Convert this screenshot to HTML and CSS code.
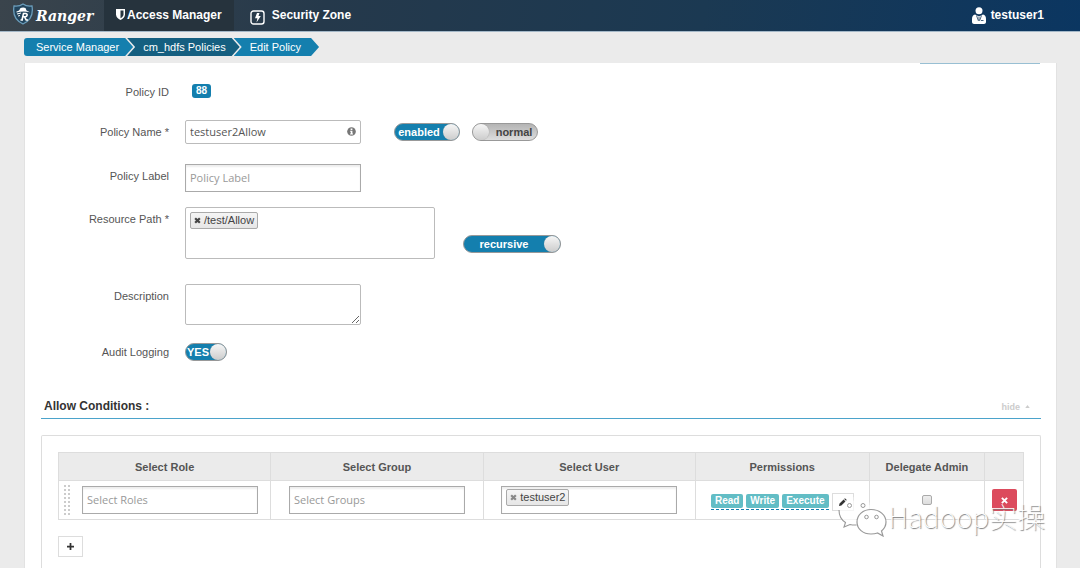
FILE: index.html
```html
<!DOCTYPE html>
<html lang="en">
<head>
<meta charset="utf-8">
<title>Ranger - Edit Policy</title>
<link rel="stylesheet" href="styles.css">
</head>
<body>
<header class="topbar">
  <a class="brand" href="#">
    <svg class="brand-icon" viewBox="0 0 22 22" aria-hidden="true">
      <path d="M11 1C8.500 2.800 5 3.400 2 3C1 9 2 17 11 21C20 17 21 9 20 3C17 3.400 13.500 2.800 11 1Z" fill="#23455d" stroke="#6b9dbb" stroke-width="1.300"/>
      <path d="M4.500 8.500C7 8 7.500 7.500 8 5.500C9.500 4.300 12 4.200 13.500 5L14.500 7.500L18 9.200C13 8 9 8.200 4.500 9.500Z" fill="#fff"/>
      <path d="M5 11L9 10M6 13L8 12.500" stroke="#fff" stroke-width="1"/>
      <path d="M8.500 17H11M10 17L11.500 10.500H13.500C16 10.500 15.500 13.500 13 13.700H11M12.500 13.700L14.200 17H16" fill="none" stroke="#fff" stroke-width="1.600"/>
    </svg>
    <span class="brand-name">Ranger</span>
  </a>
  <nav class="nav">
    <a class="nav-link nav-link-active" href="#">
      <svg class="shield-icon" viewBox="0 0 9 11" aria-hidden="true"><path d="M0 0H9V5.500C9 8 7 10 4.500 11C2 10 0 8 0 5.500Z" fill="#fff"/><path d="M7.500 1.500V5.500C7.500 7 6.300 8.300 4.500 9.200V1.500Z" fill="#26333d"/></svg>
      <span>Access Manager</span>
    </a>
    <a class="nav-link nav-link-zone" href="#">
      <svg class="zone-icon" viewBox="0 0 15 15" aria-hidden="true"><rect x="1" y="1" width="13" height="13" rx="2.500" fill="none" stroke="#fff" stroke-width="1.400"/><path d="M7 3H9.500L8.500 6H10.800L6.500 12.500L7.400 8.300H5Z" fill="#fff"/></svg>
      <span>Security Zone</span>
    </a>
  </nav>
  <a class="user" href="#">
    <svg class="user-icon" viewBox="0 0 14 17" aria-hidden="true"><circle cx="7" cy="3.700" r="3.500" fill="#fff"/><path d="M3 7.500L7 9.500L11 7.500C13 8 14 9.500 14 12V15C14 16.300 13 17 12 17H2C1 17 0 16.300 0 15V12C0 9.500 1 8 3 7.500Z" fill="#fff"/><path d="M4.500 8.500L6.500 14M9.500 8.500L7.500 14M7 10V13M9 13.500H11.500" stroke="#163a5c" stroke-width=".8" fill="none"/></svg>
    <span>testuser1</span>
  </a>
</header>
<nav class="crumbs" aria-label="Breadcrumb">
  <a class="crumb crumb-first" href="#">Service Manager</a>
  <a class="crumb crumb-dark" href="#">cm_hdfs Policies</a>
  <a class="crumb crumb-last" href="#">Edit Policy</a>
</nav>
<main class="panel">
  <div class="panel-accent"></div>
  <form class="form">
    <div class="row row-id">
      <span class="label">Policy ID</span>
      <span class="badge">88</span>
    </div>
    <div class="row row-name">
      <label class="label" for="name">Policy Name *</label>
      <div class="field-info">
        <input class="text text-name" id="name" type="text" value="testuser2Allow">
        <svg class="info-icon" viewBox="0 0 10 10" aria-hidden="true"><circle cx="5" cy="5" r="4.800" fill="#777"/><path d="M4 1.700H6V3.200H4ZM3.500 4.200H6V7.300H6.700V8.300H3.400V7.300H4.200V5.200H3.500Z" fill="#fff"/></svg>
      </div>
      <label class="toggle toggle-enabled"><span class="toggle-text">enabled</span><input class="knob" type="checkbox" checked></label>
      <label class="toggle toggle-off"><input class="knob" type="checkbox"><span class="toggle-text">normal</span></label>
    </div>
    <div class="row row-label">
      <label class="label" for="policy-label">Policy Label</label>
      <input class="text text-square" id="policy-label" type="text" placeholder="Policy Label">
    </div>
    <div class="row row-path">
      <label class="label" for="path">Resource Path *</label>
      <div class="tagbox tagbox-path">
        <span class="tag"><button class="tag-x" type="button" aria-label="Remove /test/Allow"><svg viewBox="0 0 6 6"><path d="M1 1L5 5M5 1L1 5" stroke="#444" stroke-width="1.900"/></svg></button>/test/Allow</span>
        <input class="tag-input" id="path" type="text">
      </div>
      <label class="toggle toggle-recursive"><span class="toggle-text">recursive</span><input class="knob" type="checkbox" checked></label>
    </div>
    <div class="row row-description">
      <label class="label" for="description">Description</label>
      <textarea class="text text-area" id="description"></textarea>
    </div>
    <div class="row row-audit">
      <label class="label" for="audit">Audit Logging</label>
      <label class="toggle toggle-audit"><span class="toggle-text">YES</span><input class="knob" id="audit" type="checkbox" checked></label>
    </div>
  </form>
  <section class="conditions">
    <div class="section-head">
      <h2 class="section-title">Allow Conditions :</h2>
      <a class="hide" href="#">hide <svg class="caret" viewBox="0 0 6 4" aria-hidden="true"><path d="M0 4L3 0L6 4Z" fill="#ccc"/></svg></a>
    </div>
    <div class="box">
      <table class="table">
        <colgroup><col class="col-wide"><col class="col-wide"><col class="col-wide"><col class="col-perm"><col class="col-admin"><col class="col-remove"></colgroup>
        <thead>
          <tr><th>Select Role</th><th>Select Group</th><th>Select User</th><th>Permissions</th><th>Delegate Admin</th><th></th></tr>
        </thead>
        <tbody>
          <tr>
            <td><div class="cell cell-role"><span class="grip"></span><input class="text text-square" type="text" placeholder="Select Roles" aria-label="Select Roles"></div></td>
            <td><div class="cell"><input class="text text-square" type="text" placeholder="Select Groups" aria-label="Select Groups"></div></td>
            <td><div class="cell"><div class="tagbox tagbox-user"><span class="tag"><button class="tag-x" type="button" aria-label="Remove testuser2"><svg viewBox="0 0 6 6"><path d="M1 1L5 5M5 1L1 5" stroke="#888" stroke-width="1.900"/></svg></button>testuser2</span><input class="tag-input" type="text" aria-label="Select User"></div></div></td>
            <td><div class="cell cell-perm"><span class="perms"><span class="perm">Read</span><span class="perm">Write</span><span class="perm">Execute</span></span><button class="edit" type="button" aria-label="Edit permissions"><svg viewBox="0 0 9 9"><path d="M0 9L.6 6.300L5.200 1.700L7.300 3.800L2.700 8.400ZM5.800 1.100L6.700 .2L8.800 2.300L7.900 3.200Z" fill="#333"/></svg></button></div></td>
            <td><div class="cell"><input class="check" type="checkbox" aria-label="Delegate Admin"></div></td>
            <td><div class="cell"><button class="remove" type="button" aria-label="Remove row"><svg viewBox="0 0 8 8"><path d="M1 1L7 7M7 1L1 7" stroke="#fff" stroke-width="2.200"/></svg></button></div></td>
          </tr>
        </tbody>
      </table>
      <button class="add" type="button" aria-label="Add row"><svg viewBox="0 0 8 8"><path d="M4 0V8M0 4H8" stroke="#333" stroke-width="2"/></svg></button>
    </div>
  </section>
</main>
<div class="watermark">
  <svg class="wechat" viewBox="0 0 50 42" aria-hidden="true">
    <path d="M18 2C14 2 10.500 3.500 8 6L1 14C1 21 3.500 25 7.500 27.500L6 32L12 29.500C14 30 16 30.200 18 30C17 20 24 14 35 14C33.500 7 27 2 18 2Z" fill="#fff" fill-opacity=".3"/>
    <path d="M10 10C15 3 28 1 34 14C24 14 17 20 18 30L12 29L6 32L8 27C3 24 1 19 2 15Z" fill="#fff" fill-opacity=".6"/>
    <path d="M1 15C1 21 3.500 25 7.500 27.500L6 32L12 29.500C14 30 16 30.200 18.500 30" fill="none" stroke="#999" stroke-width="1.100"/>
    <path d="M33 14.500C25 14.500 19 20 19 27C19 34 25 39 33 39C35.500 39 37.500 38.700 39.500 38L45 41L43.500 36C46.500 33.500 48 30.500 48 27C48 20 41.500 14.500 33 14.500Z" fill="#fff" stroke="#999" stroke-width="1.200"/>
    <g fill="#fff" stroke="#999" stroke-width="1"><circle cx="11.500" cy="10.500" r="2"/><circle cx="25" cy="10.500" r="2"/><circle cx="28.500" cy="22" r="1.800"/><circle cx="38.500" cy="22" r="1.800"/></g>
  </svg>
  <span>Hadoop实操</span>
</div>
</body>
</html>
```

FILE: styles.css
```css
* { box-sizing: border-box; }
body {
  margin: 0;
  min-height: 100vh;
  display: flex;
  flex-direction: column;
  position: relative;
  background: #ebebeb;
  color: #555;
  font: 11px/16px "Liberation Sans", Arial, sans-serif;
}
a { color: inherit; text-decoration: none; }
button { padding: 0; cursor: pointer; }
svg { display: block; }

.topbar {
  display: flex;
  height: 32px;
  border-bottom: 1px solid #a4b8c8;
  background: linear-gradient(100deg, #3a444c 0%, #25394b 30%, #1b3952 65%, #0b3661 100%);
  color: #fff;
  font-size: 12px;
  line-height: 30px;
  font-weight: bold;
}
.brand { display: flex; align-items: flex-start; width: 104px; padding-left: 12px; gap: 2px; }
.brand-icon { width: 22px; height: 22px; margin-top: 3px; }
.brand-name { font: italic bold 14px/32px "DejaVu Serif", serif; }
.nav { display: flex; flex: 1; }
.nav-link { display: flex; align-items: flex-start; padding: 0 12px; gap: 2px; }
.nav-link-active { background: #26333d; }
.shield-icon { width: 9px; height: 11px; margin-top: 9px; }
.nav-link-zone { padding-left: 16px; gap: 7px; }
.zone-icon { width: 15px; height: 15px; margin-top: 10px; }
.user { display: flex; align-items: flex-start; gap: 5px; padding-right: 36px; }
.user-icon { width: 14px; height: 17px; margin-top: 7px; }

.crumbs { display: flex; margin: 6px 24px 7px; }
.crumb {
  height: 18px;
  padding: 0 14px 0 16px;
  margin-left: -6px;
  background: #147fae;
  color: #fff;
  line-height: 18px;
  clip-path: polygon(0 0, calc(100% - 8px) 0, 100% 50%, calc(100% - 8px) 100%, 0 100%, 8px 50%);
}
.crumb-first {
  margin-left: 0;
  padding: 0 14px 0 12px;
  border-radius: 3px 0 0 3px;
  clip-path: polygon(0 0, calc(100% - 8px) 0, 100% 50%, calc(100% - 8px) 100%, 0 100%);
}
.crumb-last { padding-right: 18px; }
.crumb-dark { background: #155f80; }

.panel {
  flex: 1;
  display: flex;
  flex-direction: column;
  margin: 0 23px 0 24px;
  padding: 0 16px;
  border: 1px solid #e2e2e2;
  border-width: 0 1px;
  background: #fff;
}
.panel-accent { align-self: flex-end; width: 120px; height: 1px; background: #98bfd3; }
.form { display: flex; flex-direction: column; }
.row { display: flex; align-items: flex-start; }
.label { width: 128px; margin-right: 16px; text-align: right; }
.row-id { margin-top: 20px; }
.row-name { margin-top: 20px; align-items: center; }
.row-label { margin-top: 20px; }
.row-label .label { padding-top: 4px; }
.row-path { margin-top: 15px; }
.row-path .label { padding-top: 4px; }
.row-description { margin-top: 25px; }
.row-description .label { padding-top: 4px; }
.row-audit { margin-top: 18px; align-items: center; }

.badge {
  margin-left: 7px;
  padding: 0 4px;
  border-radius: 3px;
  background: #147fae;
  color: #fff;
  font: bold 10px/14px "Liberation Sans", Arial, sans-serif;
}
.text {
  display: block;
  width: 176px;
  height: 24px;
  padding: 0 4px 1px;
  border: 1px solid #bbb;
  border-radius: 2px;
  background: #fff;
  color: #555;
  font: 11px/16px "Open Sans", "Noto Sans", sans-serif;
}
.text::placeholder { color: #999; opacity: 1; }
.text-square { height: 28px; padding: 0 4px 2px; border-radius: 0; border-color: #aaa; box-shadow: inset 0 2px 2px #eee; }
.text-area { height: 41px; resize: vertical; }
.field-info { display: flex; align-items: center; position: relative; margin-right: 33px; }
.info-icon { position: absolute; right: 5px; top: 7px; width: 9px; height: 9px; }

.toggle {
  display: flex;
  align-items: center;
  height: 18px;
  border: 1px solid #999;
  border-radius: 9px;
  background: #147fae;
  color: #fff;
  font-weight: bold;
  line-height: 16px;
}
.toggle-text { flex: 1; text-align: center; }
.knob {
  appearance: none;
  flex: none;
  width: 16px;
  height: 16px;
  margin: 0;
  border-radius: 50%;
  background: linear-gradient(#f6f6f6, #ccc);
  box-shadow: 0 0 1px #777;
}
.toggle-enabled, .toggle-off { width: 66px; }
.toggle-off { margin-left: 12px; background: linear-gradient(#b4b4b4, #ddd); color: #444; }
.toggle-off .toggle-text { padding-left: 2px; }
.toggle-recursive { width: 98px; margin: 28px 0 0 28px; }
.toggle-audit { width: 42px; }

.tagbox { display: flex; align-items: flex-start; gap: 4px; padding: 4px; border: 1px solid #bbb; background: #fff; }
.tagbox-path { width: 250px; height: 52px; border-radius: 2px; }
.tagbox-user { width: 176px; height: 28px; padding-top: 2px; border-color: #aaa; box-shadow: inset 0 2px 2px #eee; }
.tag {
  display: flex;
  align-items: center;
  gap: 3px;
  padding: 0 3px;
  border: 1px solid #aaa;
  border-radius: 2px;
  background: linear-gradient(#f5f5f5, #e6e6e6);
  color: #444;
  line-height: 15px;
}
.tag-x { border: 0; background: none; }
.tag-x svg { width: 7px; height: 7px; }
.tag-input { flex: 1; min-width: 0; height: 16px; padding: 0; border: 0; background: none; outline: 0; }

.conditions { flex: 1; display: flex; flex-direction: column; margin-top: 37px; }
.section-head { display: flex; justify-content: space-between; align-items: center; padding: 0 11px 3px 3px; border-bottom: 1px solid #4ba3cb; margin-right: -1px; }
.section-title { margin: 0; color: #333; font-size: 12px; line-height: 17px; }
.hide { display: flex; align-items: center; gap: 5px; color: #ccc; font-size: 9px; font-weight: bold; }
.caret { width: 5px; height: 3px; }
.box { flex: 1; margin: 16px -1px 0 0; padding: 16px; border: 1px solid #ddd; border-bottom: 0; border-radius: 2px 2px 0 0; }
.table { width: 100%; border-collapse: collapse; table-layout: fixed; }
.col-wide { width: 22%; }
.col-perm { width: 18%; }
.col-admin { width: 12%; }
.col-remove { width: 4%; }
.table th, .table td { border: 1px solid #ddd; padding: 0; }
.table th { height: 28px; background: #ebebeb; }
.table td { height: 39px; }
.cell { display: flex; align-items: center; justify-content: center; }
.cell-role { justify-content: flex-start; gap: 12px; padding-left: 4px; }
.grip { width: 7px; height: 33px; background: radial-gradient(circle, #ccc 1px, transparent 1px) 0 0 / 4px 4px; }
.cell-perm { gap: 3px; padding-top: 4px; }
.perms { display: flex; gap: 3px; padding-bottom: 1px; border-bottom: 1px dashed #147fae; }
.perm { padding: 0 4px; border-radius: 2px; background: #62bdc5; color: #fff; font-size: 10px; font-weight: bold; line-height: 14px; }
.edit { display: flex; align-items: center; justify-content: center; width: 22px; height: 18px; border: 1px solid #ddd; background: #fff; }
.edit svg { width: 8px; height: 8px; }
.check { appearance: none; width: 10px; height: 10px; margin: 0; border: 1px solid #aaa; border-radius: 2px; background: linear-gradient(#eee, #ddd); }
.remove { display: flex; align-items: center; justify-content: center; width: 25px; height: 22px; border: 0; border-radius: 2px; background: #dc4b5d; }
.remove svg { width: 7px; height: 7px; }
.add { display: flex; align-items: center; justify-content: center; width: 25px; height: 21px; margin-top: 16px; border: 1px solid #ddd; background: #fff; }
.add svg { width: 7px; height: 7px; }

.watermark {
  position: absolute;
  right: 35px;
  bottom: 30px;
  display: flex;
  align-items: flex-start;
  color: #fff;
  font: 100 28px/42px "Noto Sans CJK SC", sans-serif;
  height: 48px;
  text-shadow: 1px 1px 1px #777;
  pointer-events: none;
}
.wechat { width: 50px; height: 42px; }
```
